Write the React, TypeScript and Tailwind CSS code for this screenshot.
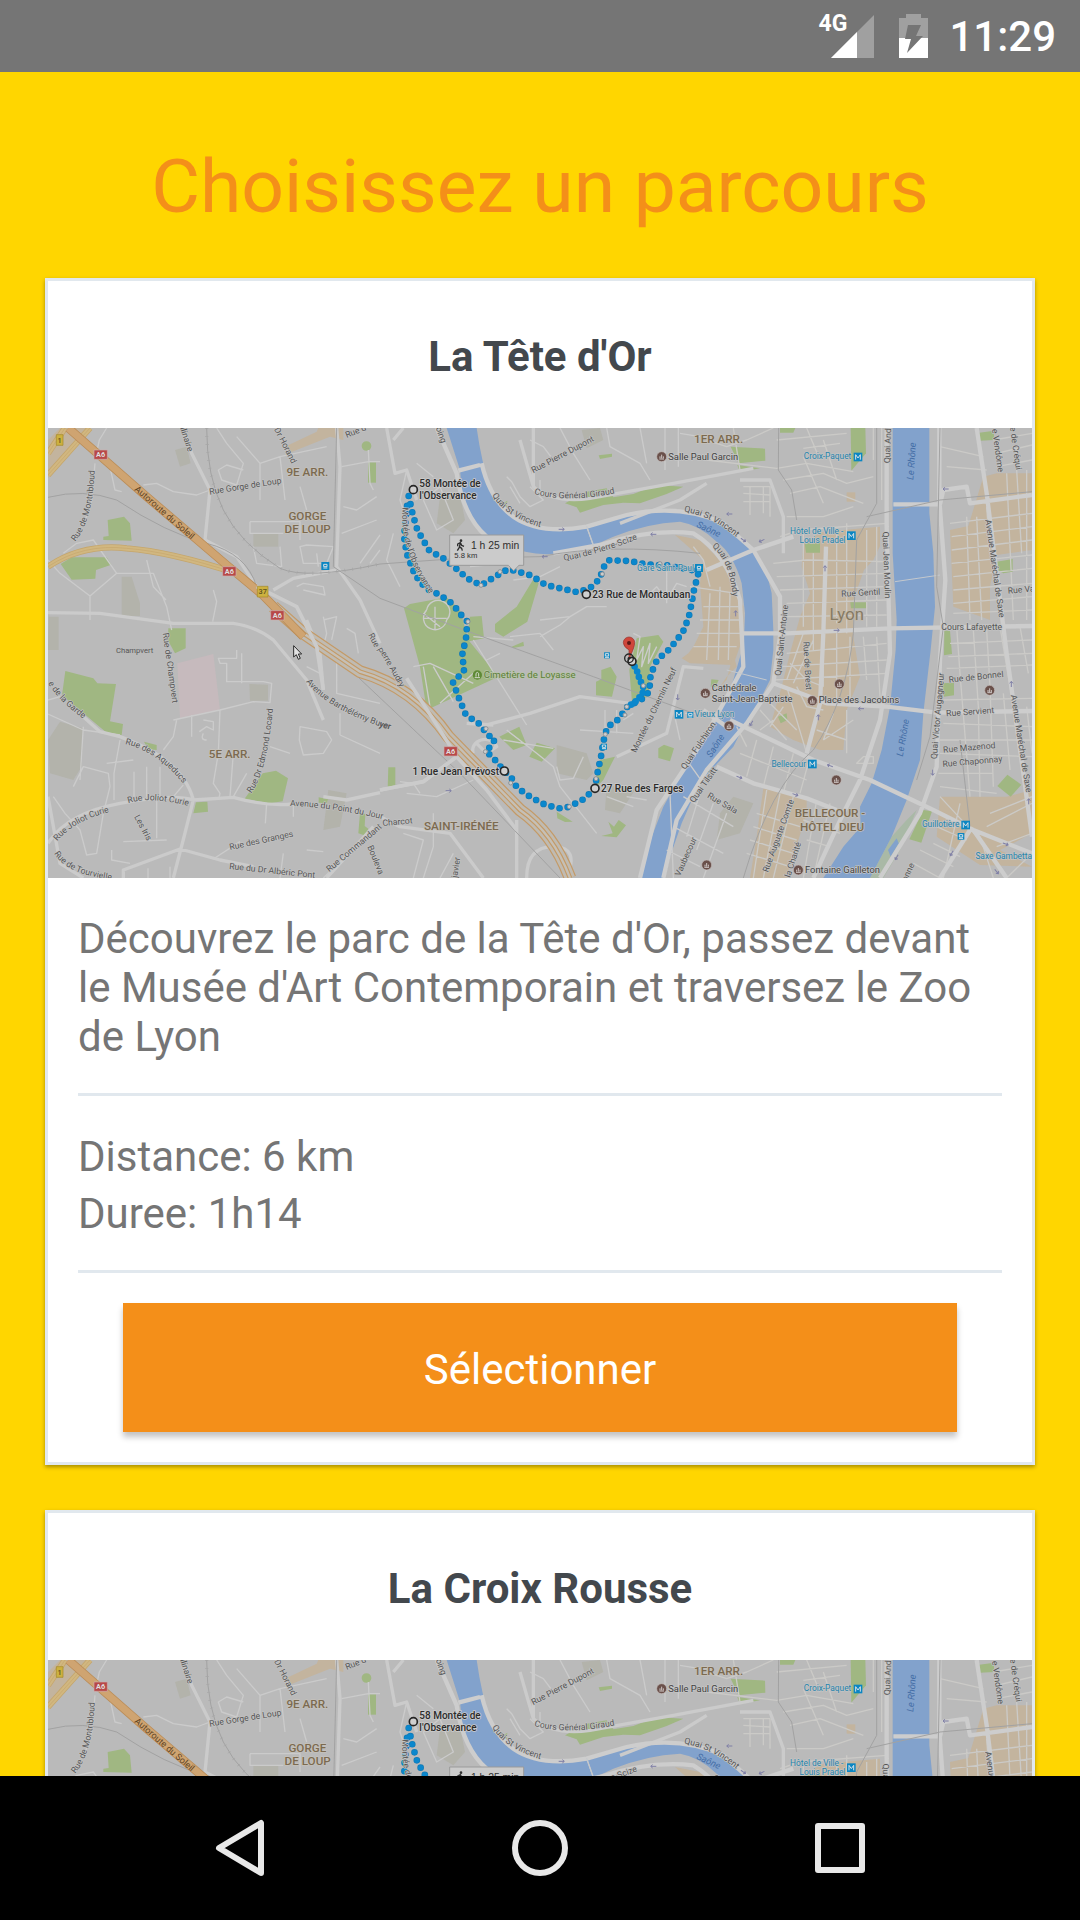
import { useId } from "react";

type Label = { text: string; x: number; y: number; rotate?: number };
type CurvedLabel = { text: string; path: string };

const SAONE =
  "M1220 24L1260 150L1270 250Q1275 285 1340 345Q1400 395 1520 403Q1620 400 1720 350Q1820 310 1920 305Q1980 315 2030 365Q2080 400 2105 490L2115 580L2112 670L2080 780L2055 850L2010 940L1920 1070L1870 1160L1820 1290L1798 1374H1875L1890 1310L1925 1210L1980 1085L2080 980L2110 920L2150 860L2190 780L2200 690V630L2195 520L2180 460L2140 395L2090 345Q2010 285 1930 275Q1830 272 1740 295L1640 325Q1560 342 1460 315Q1385 265 1350 200Q1325 130 1310 24Z";
const RHONE =
  "M2558 24V400L2570 600L2567 690L2550 860L2525 990L2495 1090L2460 1160L2462 1220L2410 1280L2350 1374H2490L2555 1250L2600 1140L2640 1020L2650 880L2672 690L2685 560L2680 400L2668 280V24Z";

const GREENS = [
  "M203 300L252 290L270 310L275 362L190 360V350L206 348Z",
  "M62 432L95 412L200 412L214 434L168 450L166 476L95 479Z",
  "M984 127H1008V188H984Z",
  "M965 78A14 14 0 1 0 994 78A14 14 0 1 0 965 78Z",
  "M385 625H437V685L405 700L383 660Z",
  "M76 753L160 775L172 790L228 792L210 904L249 912L245 945L200 938L66 826Z",
  "M312 965L350 975V990L325 988Z",
  "M614 1136L668 1060L708 1052L744 1075L728 1144L690 1150Z",
  "M468 1147L502 1145L504 1175L460 1180Z",
  "M836 1132L864 1138L860 1150L836 1148Z",
  "M960 1178L976 1182L974 1218L985 1226L978 1248L955 1240Z",
  "M1045 1042H1066V1105H1043Z",
  "M1092 565L1110 552L1220 532L1260 570L1285 660L1375 770L1160 870L1140 740Z",
  "M1290 590L1325 588L1332 655L1280 665Z",
  "M1480 478L1496 490L1462 605L1390 650L1365 635V612L1430 560Z",
  "M1415 680L1450 665L1452 678L1420 684Z",
  "M1575 250L1640 215L1700 205L1720 232L1780 222L1850 195L1930 200L1880 222L1800 250L1750 248L1690 255L1620 278L1610 262Z",
  "M1676 106L1716 101V110L1680 117Z",
  "M1390 250L1402 242L1400 262Z",
  "M1790 655L1855 645L1870 665L1830 740L1826 830L1776 845L1768 750Z",
  "M1684 750L1712 740L1730 770L1716 830L1668 826V785L1684 778Z",
  "M1378 950L1438 920L1460 975L1420 990Z",
  "M1490 968L1545 985L1505 1025L1468 1010Z",
  "M1855 985L1872 974L1902 985L1890 1024L1855 1014Z",
  "M1680 1020L1725 1010L1690 1080L1672 1098L1668 1060Z",
  "M1550 1175L1598 1205L1575 1206L1552 1195Z",
  "M1705 1205L1722 1220L1736 1200L1758 1216L1730 1252L1684 1248L1718 1240Z",
  "M2072 80L2175 86L2176 122L2096 130Z",
  "M2092 135L2160 145L2100 156Z",
  "M2220 24H2266L2260 38H2220Z",
  "M2432 24H2476L2478 100L2434 152Z",
  "M2294 370H2340V398H2298Z",
  "M2431 547H2478V565H2433Z",
  "M2818 38L2862 32V60L2820 62Z",
  "M2870 425L2918 417V455L2890 460L2870 450Z",
  "M2713 632H2730L2736 702L2712 706Z",
  "M2704 790L2742 788V826L2712 830Z",
  "M2872 1098L2902 1064L2944 1094L2912 1130Z",
  "M2650 1170L2676 1174L2644 1268L2608 1258Z",
  "M2014 778L2036 780L2026 802L2012 800Z",
  "M2214 890L2240 880L2242 900L2222 910Z",
];

const TANS = [
  "M735 80L830 35L835 24H910V60L870 50L745 100Z",
  "M24 60L60 24H150L24 175Z",
  "M1905 345L1980 360L2040 420L2090 520L2110 560L2110 650L2080 735L1950 730L1925 715L1945 700L1960 680L1990 620L1980 490L1990 420Z",
  "M2290 365L2350 335L2520 320V378L2500 420L2472 450L2440 540V650L2460 770L2420 870L2410 990L2340 990L2260 960L2190 920L2225 800L2250 700L2280 590L2310 520L2285 440Z",
  "M2730 330L2785 318L2830 170L2870 160H2976V390L2870 405L2850 500V600L2740 560Z",
  "M2170 1105L2300 1130L2300 1180L2240 1374H2130L2150 1250Z",
  "M2700 1130L2900 1130L2976 1110V1240L2880 1290L2976 1340L2820 1335L2690 1250Z",
  "M2420 217H2446V245H2420Z",
  "M2040 800L2060 770L2090 740L2080 700L2060 780Z",
];

const BUILT = [
  "M405 90L440 80L452 130L420 140Z",
  "M640 340H715V380H640Z",
  "M245 470H275L300 550V588H245Z",
  "M26 590H56V690H24Z",
  "M60 905L130 925L125 1040L100 1080L30 1060L24 960Z",
  "M628 792L684 794V842H630Z",
  "M1550 975L1640 1000L1660 1060L1640 1080L1550 1060Z",
  "M1700 1095L1785 1110L1740 1180L1695 1170Z",
  "M1625 30L1680 24L1690 60L1640 85Z",
  "M1200 230L1260 225L1275 300L1240 340L1190 310Z",
  "M2080 1130L2140 1150L2100 1240L2030 1260L2040 1180Z",
  "M865 1110L920 1120L900 1220L850 1230Z",
];

const MINOR_ROADS =
  "M165 120L178 60L200 24M205 118L225 210L245 215M310 195L350 190L400 215L470 225L510 210M165 130L155 240L130 320M70 400L110 370L160 360L230 460L150 528L60 460L24 420M150 528V600M230 460H340L380 560L395 630M320 420L340 500L378 540M520 510L530 545L518 605M530 24L560 70L610 130L590 195L545 180L535 150L560 135L610 150M590 50L660 130L720 110L860 80M660 130V240M720 110L735 240M780 200L800 270M630 305H780V360M630 305V340H730M640 380L650 430L725 440L720 380M780 380L800 375L880 380L860 430H790ZM835 440L830 400M905 140L985 125H1020M985 90L990 190L1000 210M910 260L950 270L1010 230M905 340L1010 300M960 430L1020 345M990 430L1020 390" +
  "M770 500L790 490L850 500L855 525L790 510M850 590L860 640L850 680L870 700M850 600L890 590L875 660M920 625L945 640L955 700M24 882L130 930L240 945M400 900L540 870L640 845L690 848L695 790L670 785H560V730H540L535 715H590V690M605 700V790M540 870L535 1000L520 1090L540 1120L536 1140M410 900L400 950L370 990M455 885V950M490 900L520 905V930L500 920L478 935M490 940Q480 960 500 960M240 960L222 1060V1140M200 1030L280 1020M282 1055V1130M320 1040V1130M360 1040V1130M100 1100L130 1040L205 1060L210 1100L190 1180L170 1300L140 1305L120 1230L75 1180L40 1130M250 1265L380 1260M350 1140V1255M580 1000L570 1130M620 1060L580 1130M680 1150L676 1210M760 1150V1190M690 980L750 1000M780 920L860 935L875 960L850 1000L790 1005L778 960ZM900 880V945M900 945L1020 1000M890 720V820L1020 850M840 760L800 740M520 1317L600 1265M850 1295L800 1290M720 1374L730 1300M390 1374V1340M324 1374V1345M215 1290V1320L270 1330M400 1130L430 1095M24 840L60 830M130 920L120 1080M850 1374L1000 1230" +
  "M1100 300L1080 240L1100 150M1150 240L1200 200L1240 300L1190 330L1150 240M1060 340L1040 420L1080 500M1180 170L1130 130M1470 60L1510 80L1540 120M1560 24L1600 100L1650 180M1700 24L1710 80L1800 130L1830 180M1800 24L1820 130M1875 24V150M1915 24V140M1920 40L1980 50M1470 200L1510 240L1470 260L1440 230L1415 185L1400 170M1410 200L1440 250M1500 210V180M1640 320L1660 375M1420 480L1500 470L1560 440M1500 600L1590 590L1640 560L1700 560M1590 590L1560 615L1500 650M1410 650L1500 640L1540 690M1290 440L1400 430M1300 650L1420 660M1150 580L1200 620M1160 570A35 35 0 1 0 1220 600A35 35 0 1 0 1160 570M1150 595H1220M1185 560V630M1120 740L1170 730L1300 790M1170 860L1150 740M1200 850L1300 760M1240 845L1180 740M1300 660L1460 915M1380 700L1340 720M1400 930L1490 1000L1540 1040L1560 1100L1670 1240M1390 960L1450 970L1540 985M1550 1040L1560 1080L1600 1075L1630 1010M1620 930L1700 935L1780 940M1695 870V930M1730 870V940M1750 900L1780 880" +
  "M1700 920L1690 970M1780 640L1800 650L1790 720L1810 680L1805 740L1830 670L1825 730L1850 680M1830 520L1850 500L1880 540L1910 490L1940 500M1880 450V550M1100 1120L1190 1130L1300 1080M1180 1180V1280L1150 1374M1090 1240L1150 1260L1120 1374M1300 1060L1380 1050M1240 1300L1200 1374M1080 1085L1120 1090L1140 1120M1760 1130L1820 1140M1700 1130L1780 1160M1920 960L1900 870M1935 880L2020 880M1890 1120L1900 1374M1930 1130L2080 1220M1900 1220L2050 1300M1880 1290L1980 1340M1980 1120L1940 1250M2020 1150L1970 1290M2060 1180L1990 1374M1940 1020L1990 1090";

const CITY_STREETS =
  "M2000 60L2060 80L2120 60L2200 24M2080 24L2100 150M2000 120L2210 145M2110 200H2190V290M2130 200V285M2170 200V280M2110 220L2190 225M2110 245H2190M2210 145L2300 130L2440 155M2230 180L2350 160L2420 190L2500 170M2250 220L2340 200L2470 250M2240 290L2350 290L2440 260M2290 110L2350 250M2350 60L2390 180M2300 24L2340 120M2400 70L2290 85M2210 60L2420 40M2500 24V120M2525 24V240M2220 350L2280 330L2540 310M2200 430L2300 420L2550 425M2210 470L2540 460M2220 510L2530 500M2240 550L2540 540M2240 590L2540 585M2240 700L2540 670M2220 740L2540 720M2200 780L2540 760M2290 340V620M2320 400V690M2390 340V610M2420 310V640M2480 330V620M2510 320V620M2290 640L2240 780M2320 660L2260 790M2350 640V800M2390 640V840M2430 650V860M2470 650L2480 780M2510 650L2520 830" +
  "M2240 800L2300 1000M2270 800L2300 860L2350 870M2350 800L2300 780L2250 730M2160 870L2240 960M2180 840L2270 930M2200 900L2160 930M2230 860L2190 920M2100 1000L2300 1080M2150 960L2120 1070M2200 980L2170 1100M2260 1000L2230 1120M2310 1010L2280 1120M2380 880L2350 960M2420 870V1000M2440 900L2350 960M2470 1010H2500V1030H2450Z" +
  "M2700 80L2830 110M2720 140L2840 150M2870 100L2976 75M2860 60L2976 40M2870 140L2976 120M2730 310L2976 280M2735 350L2976 320M2735 390L2976 360M2735 430L2976 405M2740 470L2976 445M2740 510L2976 490M2740 550L2976 530M2740 580L2976 570M2730 670L2976 660M2725 710L2976 700M2720 745L2976 735M2710 840L2976 835M2710 910L2976 920M2700 960L2976 960M2700 1000L2976 1010M2695 1060L2860 1060M2700 1100L2870 1120M2780 290L2790 600M2810 290L2825 600M2840 260L2850 400M2900 160L2920 600M2930 150L2945 400M2960 150V600M2750 620L2760 760L2790 1130M2800 630L2815 860L2820 1130M2840 630L2850 800L2860 1100M2880 620L2920 860M2940 620L2965 760M2960 860L2976 1000M2890 820L2910 1050" +
  "M1960 380L1990 420L2010 500M1950 500L2090 520M1990 560H2100M1980 600H2100M1970 640H2100M1960 680L2090 680M2010 520L2000 720M2040 500L2035 720M2070 520L2065 720M2180 1110L2140 1374M2220 1120L2170 1374M2260 1130L2200 1374M2150 1180L2280 1220M2140 1220L2270 1260M2130 1260L2260 1300M2120 1300L2250 1340M2330 1140L2290 1374M2370 1150L2320 1374M2290 1200L2400 1240M2300 1260L2370 1280M2700 1130L2830 1270M2760 1150L2710 1374M2820 1250L2860 1374M2690 1220L2780 1260M2680 1270L2760 1310M2840 1220L2976 1150M2850 1180L2976 1130M2870 1280L2976 1240M2900 1374L2976 1300M2640 1290L2740 1340M2620 1330L2700 1374M2090 920L2120 980M2330 930L2420 960";

const MEDIUM_ROADS =
  "M430 24L455 100L510 210L495 360L590 410L650 500M890 24L900 140L890 440L960 540L1020 670M700 510L760 475L890 450M24 578L180 580L400 610H580Q650 620 700 660L800 780L850 900M800 600L840 700L850 810M130 890L180 935L240 950Q430 1020 460 1140Q430 1260 400 1374M24 1270Q80 1180 240 1150T460 1140L580 1132Q680 1160 760 1152M250 1374V1350L420 1287L540 1320L640 1340M860 1374L1000 1220M850 1130L920 1140L1020 1118M24 1130L60 1330L130 1374M1040 24L1065 160L1100 150L1130 240M1060 60L1090 24M1480 24V200L1440 60M1740 310L1920 240L2000 190M1480 200Q1540 250 1650 235L1900 190L2140 145M1320 920L1470 880L1620 830L1770 850M1280 910L1360 915M1020 1110L1150 1085L1250 1010M1300 1000A35 30 0 1 1 1370 980L1340 1000L1310 970M1730 1010L1880 940L1930 740L1990 745M1000 1180L1080 1220L1230 1240L1330 1374M1430 1200V1374M1460 1374Q1460 1280 1540 1280T1580 1374M2100 180H2190L2230 290V400";

const MAJOR_ROADS =
  "M1190 24L1250 160Q1270 290 1340 350M1325 130Q1350 240 1420 290Q1500 345 1640 320L1760 285Q1920 250 2050 310L2140 390L2220 530V650L2200 790L2120 910L2000 1050L1910 1200L1870 1374M1540 400L1680 375Q1830 325 1960 340Q2060 400 2100 540L2110 740L1990 960L1850 1170L1800 1374M2000 450L2140 390L2260 350M2110 640H2240L2550 625L2976 618M2540 24V320L2550 700L2520 900L2460 1080L2410 1180L2320 1374M2698 24V240L2716 480L2700 720L2690 1040L2640 1180L2520 1374M2560 253H2700L2710 210L2780 200L2790 250L2976 225M2810 24L2840 220L2900 700L2950 1060L2976 1250M1255 152L1320 135M2200 790L2310 830L2360 850L2540 860L2690 878L2976 873M2070 900L2320 1020L2490 1080L2680 1170L2800 1230L2976 1300M2030 1040L2140 1090L2300 1135L2390 1170M2358 380L2350 640L2340 850L2300 1000M2800 1230L2900 1374M2790 1230L2700 1374M1990 870L2060 920";

const FREEWAY = "M85 24L320 230L560 435L668 525L790 650";
const FREEWAY_SOUTH = "M700 560L790 640L960 755Q1120 800 1225 950L1440 1170Q1540 1240 1590 1374";
const RING_ROAD =
  "M24 440Q130 370 260 385Q390 395 590 460M24 165L150 24M24 100L75 24";
const RAILWAYS =
  "M500 24Q500 170 550 270T720 445Q800 480 1020 432M24 232Q130 205 230 240Q380 340 500 370T650 500L900 720L1260 1060L1560 1374M890 24L880 440L1020 535L1300 640M1020 432L1260 415L1500 410Q1700 370 1980 400M1300 640L1660 770L1960 880M2510 24V250L2450 360L2440 640Q2420 840 2320 990Q2190 1100 2110 1374M2480 290L2700 240L2976 215M2700 24L2690 500L2710 620L2670 950L2630 1080M2760 960L2790 1220M2216 24L2215 150L2255 210L2270 300";

const ROUTE =
  "M1106 228L1118 282L1132 330L1168 392L1210 415L1244 442L1282 475L1323 496L1365 470L1403 448L1428 453L1475 467L1515 494L1565 506L1615 517L1650 504L1678 478L1692 440L1706 421L1770 423L1817 433L1880 436L1955 450L1975 460L1962 510L1949 581L1933 628L1918 650L1888 688L1851 720L1832 764L1828 814L1810 835L1760 862L1737 897L1702 921L1690 965L1683 1010L1670 1070L1665 1105L1632 1137L1588 1160L1564 1166L1517 1155L1473 1132L1431 1103L1412 1069L1392 1053L1368 1023L1340 995L1365 958L1345 946L1317 911L1297 898L1276 881L1257 835L1239 787L1272 753L1267 703L1278 655L1282 605L1267 589L1237 551L1198 524L1157 505L1125 465L1100 400L1092 350L1102 250";
const ROUTE_SPUR = "M1775 725L1790 750L1800 782L1810 797L1808 820L1790 842L1762 862";

const ROUTE_NODES = [
  [1323, 496], [1380, 455], [1687, 462], [1860, 431], [1284, 605], [1338, 926],
  [1336, 995], [1412, 1089], [1588, 1160], [1668, 1076], [1696, 943], [1760, 860],
  [1810, 797], [1755, 885],
];
const STOPS = [[1120, 209], [1639, 523], [1393, 1053], [1665, 1105], [1776, 724]];

const STREET_LABELS: Label[] = [
  { text: "Rue Gorge de Loup", x: 509, y: 224, rotate: -9 },
  { text: "Rue d", x: 920, y: 54, rotate: -22 },
  { text: "llinaire", x: 420, y: 24, rotate: 72 },
  { text: "Dr Horand", x: 702, y: 28, rotate: 63 },
  { text: "Rue P", x: 984, y: 645, rotate: 62 },
  { text: "Rue de Champvert", x: 368, y: 640, rotate: 82 },
  { text: "Rue des Granges", x: 570, y: 1290, rotate: -12 },
  { text: "Les Iris", x: 282, y: 1190, rotate: 62 },
  { text: "Rue du Dr Albéric Pont", x: 567, y: 1347, rotate: 6 },
  { text: "Rue Pierre Dupont", x: 1480, y: 160, rotate: -28 },
  { text: "oing", x: 1187, y: 24, rotate: 70 },
  { text: "Rue Commandant", x: 868, y: 1357, rotate: -40 },
  { text: "Charcot", x: 1028, y: 1218, rotate: -5 },
  { text: "Bouleva", x: 982, y: 1280, rotate: 68 },
  { text: "erre Audry", x: 1022, y: 700, rotate: 60 },
  { text: "javier", x: 1252, y: 1374, rotate: -82 },
  { text: "Montée du Chemin Neuf", x: 1788, y: 1000, rotate: -64 },
  { text: "Quai Fulchiron", x: 1936, y: 1050, rotate: -56 },
  { text: "Quai Tilsitt", x: 1962, y: 1150, rotate: -55 },
  { text: "Vaubecour", x: 1920, y: 1370, rotate: -66 },
  { text: "Rue Sala", x: 2000, y: 1132, rotate: 30 },
  { text: "Rue Auguste Comte", x: 2184, y: 1358, rotate: -70 },
  { text: "la Charité", x: 2250, y: 1374, rotate: -72 },
  { text: "Quai Saint-Antoine", x: 2222, y: 768, rotate: -84 },
  { text: "Rue de Brest", x: 2290, y: 665, rotate: 87 },
  { text: "Rue Gentil", x: 2404, y: 530, rotate: -3 },
  { text: "Quai And", x: 2550, y: 130, rotate: -88 },
  { text: "Quai Jean Moulin", x: 2528, y: 335, rotate: 88 },
  { text: "e Vendôme", x: 2856, y: 28, rotate: 82 },
  { text: "e de Créqui", x: 2910, y: 22, rotate: 82 },
  { text: "Avenue Maréchal de Saxe", x: 2836, y: 300, rotate: 82 },
  { text: "Avenue Maréchal de Saxe", x: 2912, y: 826, rotate: 81 },
  { text: "Rue Va", x: 2904, y: 521, rotate: -5 },
  { text: "Cours Lafayette", x: 2704, y: 629 },
  { text: "Rue de Bonnel", x: 2727, y: 788, rotate: -6 },
  { text: "Rue Servient", x: 2719, y: 889, rotate: -4 },
  { text: "Rue Mazenod", x: 2710, y: 998, rotate: -5 },
  { text: "Rue Chaponnay", x: 2708, y: 1041, rotate: -5 },
  { text: "Quai Victor Augagneur", x: 2690, y: 1018, rotate: -85 },
  { text: "onne", x: 2600, y: 1386, rotate: -65 },
];

const CURVED_LABELS: CurvedLabel[] = [
  { text: "Rue de Montribloud", path: "M106 365Q170 285 164 90" },
  { text: "e de la Garde", path: "M24 790Q60 850 150 910" },
  { text: "Rue des Aqueducs", path: "M255 972Q370 1000 450 1120" },
  { text: "Rue Joliot Curie", path: "M52 1264Q110 1190 260 1165" },
  { text: "Rue Joliot Curie", path: "M265 1150Q340 1125 480 1168" },
  { text: "Rue Dr Edmond Locard", path: "M634 1120Q690 1040 704 800" },
  { text: "Avenue Barthélémy Buyer", path: "M798 785Q870 880 1090 940" },
  { text: "Avenue du Point du Jour", path: "M750 1158Q880 1160 1090 1212" },
  { text: "Rue de Tourvielle", path: "M42 1300Q80 1370 260 1385" },
  { text: "Quai St Vincent", path: "M1356 226Q1400 300 1550 335" },
  { text: "Cours Général Giraud", path: "M1482 222Q1600 255 1790 205" },
  { text: "Quai de Pierre-Scize", path: "M1572 422Q1680 405 1830 342" },
  { text: "Quai St Vincent", path: "M1932 275Q2030 290 2120 380" },
  { text: "Quai de Bondy", path: "M2016 380Q2080 430 2080 580" },
  { text: "Montée de l'Observance", path: "M1088 262Q1075 400 1190 550" },
];

const AREA_LABELS = [
  { text: "9E ARR.", x: 802, y: 168 },
  { text: "GORGE", x: 802, y: 299 },
  { text: "DE LOUP", x: 803, y: 338 },
  { text: "5E ARR.", x: 569, y: 1014 },
  { text: "1ER ARR.", x: 2036, y: 70 },
  { text: "SAINT-IRÉNÉE", x: 1264, y: 1230 },
  { text: "BELLECOUR -", x: 2370, y: 1192 },
  { text: "HÔTEL DIEU", x: 2376, y: 1232 },
];

const TRANSIT_LABELS: Label[] = [
  { text: "Croix-Paquet", x: 2434, y: 117 },
  { text: "Hôtel de Ville -", x: 2410, y: 341 },
  { text: "Louis Pradel", x: 2416, y: 369 },
  { text: "Gare Saint-Paul", x: 1962, y: 452 },
  { text: "Vieux Lyon", x: 2083, y: 890 },
  { text: "Bellecour", x: 2298, y: 1040 },
  { text: "Guillotière", x: 2758, y: 1222 },
  { text: "Saxe Gambetta", x: 2976, y: 1316 },
];
const METROS = [[2454, 111], [2434, 347], [1917, 883], [2317, 1032], [2777, 1215]];
const TRAINS = [
  [856, 438, 12], [1977, 444, 12], [2763, 1249, 10],
  [1701, 706, 9], [1951, 885, 9], [1692, 980, 9],
];

const PLACE_LABELS: Label[] = [
  { text: "Salle Paul Garcin", x: 1885, y: 119 },
  { text: "Cathédrale", x: 2015, y: 813 },
  { text: "Saint-Jean-Baptiste", x: 2015, y: 846 },
  { text: "Place des Jacobins", x: 2336, y: 850 },
  { text: "Fontaine Gailleton", x: 2295, y: 1358 },
];
const PLACES = [
  [1865, 110], [1996, 820], [2067, 918], [2317, 842], [2398, 792], [2389, 1080],
  [2275, 1350], [2000, 1335], [2849, 811],
];
const EXITS = [["1", 59, 60], ["37", 668, 515]] as const;
const SHIELDS = [[182, 104], [568, 454], [712, 586], [1232, 994]];
const ARROWS = [
  [1565, 328, 0], [1514, 410, 180], [1840, 343, 180], [2068, 282, 180], [2110, 360, 35],
  [2165, 362, 155], [2355, 445, -90], [2087, 580, -90], [2390, 631, 0], [2717, 207, 180],
  [2463, 866, 180], [2335, 892, -90], [2370, 1037, 200], [2098, 1072, 20], [2266, 1124, 20],
  [2678, 1058, 90], [2914, 792, -90], [2966, 1144, -90], [2570, 1312, 120], [2735, 1300, 120],
  [2870, 1355, 50], [2897, 1272, 20], [1226, 1112, 0], [1913, 832, 90], [2134, 910, 120],
];

function RouteMap({ name }: { name: string }) {
  const id = useId();
  return (
    <svg
      role="img"
      aria-label={`Carte du parcours ${name}`}
      viewBox="24 24 2952 1350"
      className="block w-full bg-[#bababa] font-[Roboto,sans-serif]"
      fill="none"
      strokeLinejoin="round"
    >
      <defs>
        {CURVED_LABELS.map((l, i) => <path key={l.path} id={`${id}-${i}`} d={l.path} />)}
      </defs>
      <path d="M412 730L520 702L540 870L420 895Z" fill="#c6babd" />
      {BUILT.map((d) => <path key={d} d={d} fill="#b3b3ab" />)}
      {TANS.map((d) => <path key={d} d={d} fill="#c3b49e" />)}
      {GREENS.map((d) => <path key={d} d={d} fill="#a0b782" />)}
      <path d="M2555 1250L2600 1200L2630 1170L2580 1290L2530 1374H2490Z" fill="#a9b9a6" />
      <path d={SAONE} fill="#82a2cc" />
      <path d={RHONE} fill="#82a2cc" />
      <path d="M2544 1290L2570 1255L2576 1270L2552 1310Z" fill="#82a2cc" />
      <path d={MINOR_ROADS} stroke="#cbcbcb" strokeWidth="4" />
      <path d={CITY_STREETS} stroke="#cbcac7" strokeWidth="4" />
      <path d={MEDIUM_ROADS} stroke="#cbcbcb" strokeWidth="10" />
      <path d={MAJOR_ROADS} stroke="#cdcdcd" strokeWidth="13" />
      <path d="M2565 485L2700 465M1640 318L1660 378M2060 750L2180 780" stroke="#c4c8cc" strokeWidth="3" />
      <path d={RAILWAYS} stroke="#a2a2a2" strokeWidth="3" />
      <path d="M500 24Q500 170 550 270T720 445Q800 480 1020 432" stroke="#a6a6a6" strokeWidth="10" strokeDasharray="2 22" />
      <path d={RING_ROAD} stroke="#c5a66c" strokeWidth="19" />
      <path d={RING_ROAD} stroke="#d1b780" strokeWidth="14" />
      <path d={RING_ROAD} stroke="#c5a66c" strokeWidth="2" />
      <path d={FREEWAY_SOUTH} stroke="#c49a66" strokeWidth="38" />
      <path d={FREEWAY_SOUTH} stroke="#c0bbb2" strokeWidth="31" />
      <path d={FREEWAY_SOUTH} stroke="#c49a66" strokeWidth="14" />
      <path d={FREEWAY_SOUTH} stroke="#c6c0b6" strokeWidth="7" />
      <path d={FREEWAY} stroke="#bb8d58" strokeWidth="26" />
      <path d={FREEWAY} stroke="#cfa471" strokeWidth="21" />
      <path d="M650 500L770 560L830 680L850 810M1020 1110L1150 1085L1250 1010L1340 1110L1430 1230M1100 775L1200 930L1250 1010" stroke="#cbcbcb" strokeWidth="11" />

      {ARROWS.map(([x, y, r]) => (
        <path key={`${x}-${y}`} d="M-9 0H7M2 -5L8 0L2 5" stroke="#7f7fa6" strokeWidth="3" transform={`translate(${x} ${y}) rotate(${r})`} />
      ))}

      <path d={ROUTE} stroke="#1379b3" strokeWidth="20" strokeLinecap="round" strokeDasharray="0 25" />
      <path d={ROUTE} stroke="#0a87cd" strokeWidth="16" strokeLinecap="round" strokeDasharray="0 25" />
      <path d={ROUTE_SPUR} stroke="#0a87cd" strokeWidth="20" strokeLinecap="round" strokeDasharray="0 17" />
      {ROUTE_NODES.map(([x, y]) => (
        <circle key={`${x}-${y}`} cx={x} cy={y} r="6" fill="#cdcdcd" stroke="#8d9296" strokeWidth="3" />
      ))}

      <g fill="#565656" stroke="#c4c4c4" strokeWidth="4" paintOrder="stroke" fontSize="26">
        {STREET_LABELS.map((l) => (
          <text key={`${l.text}-${l.y}`} transform={`translate(${l.x} ${l.y}) rotate(${l.rotate ?? 0})`}>{l.text}</text>
        ))}
        {CURVED_LABELS.map((l, i) => (
          <text key={l.path}><textPath href={`#${id}-${i}`}>{l.text}</textPath></text>
        ))}
      </g>
      <text transform="translate(1016 920) rotate(14)" fill="#565656" fontSize="26">yer</text>
      <text x="228" y="698" fill="#565656" fontSize="23">Champvert</text>
      <text transform="translate(282 210) rotate(41)" fill="#5f4526" fontSize="27">Autoroute du Soleil</text>
      <g fill="#456ea6" fontSize="28" fontStyle="italic">
        <text transform="translate(1968 320) rotate(25)">Saône</text>
        <text transform="translate(2620 180) rotate(-86)">Le Rhône</text>
        <text transform="translate(2588 1010) rotate(-80)">Le Rhône</text>
        <text transform="translate(2014 1014) rotate(-58)">Saône</text>
      </g>
      <g fill="#7b6a50" stroke="#c6c2bb" strokeWidth="4" paintOrder="stroke" fontSize="35" fontWeight="500" textAnchor="middle">
        {AREA_LABELS.map((l) => <text key={l.text} x={l.x} y={l.y}>{l.text}</text>)}
      </g>
      <text x="2420" y="600" fill="#857a63" stroke="#c3b9a9" strokeWidth="4" paintOrder="stroke" fontSize="50" textAnchor="middle">Lyon</text>
      <g fill="#2583ac" stroke="#c4c4c4" strokeWidth="4" paintOrder="stroke" fontSize="25" textAnchor="end">
        {TRANSIT_LABELS.map((l) => <text key={l.text} x={l.x} y={l.y}>{l.text}</text>)}
      </g>
      <g fill="#424242" stroke="#c6c6c6" strokeWidth="4" paintOrder="stroke" fontSize="28">
        {PLACE_LABELS.map((l) => <text key={l.text} x={l.x} y={l.y}>{l.text}</text>)}
      </g>
      <text x="1331" y="774" fill="#5c7f38" stroke="#b9c4ab" strokeWidth="4" paintOrder="stroke" fontSize="29">Cimetière de Loyasse</text>
      <circle cx="1312" cy="765" r="14" fill="#5f8a35" />
      <path d="M1304 773H1320M1308 770V760Q1312 754 1316 760V770" stroke="#d6dccf" strokeWidth="3" />

      {METROS.map(([x, y]) => (
        <g key={`${x}-${y}`}>
          <rect x={x - 13} y={y - 13} width="26" height="26" fill="#0b86c2" />
          <path d={`M${x - 7} ${y + 8}V${y - 7}L${x} ${y + 3}L${x + 7} ${y - 7}V${y + 8}`} stroke="#d5e0e6" strokeWidth="3" />
        </g>
      ))}
      {TRAINS.map(([x, y, r]) => (
        <g key={`${x}-${y}`}>
          <rect x={x - r} y={y - r} width={r * 2} height={r * 2} fill="#0b86c2" />
          <path d={`M${x - 5} ${y - 5}H${x + 5}V${y + 2}H${x - 5}ZM${x - 6} ${y + 6}H${x + 6}`} stroke="#d5e0e6" strokeWidth="3" />
        </g>
      ))}
      {PLACES.map(([x, y]) => (
        <g key={`${x}-${y}`}>
          <circle cx={x} cy={y} r="15" fill="#6a504a" stroke="#c6c0be" strokeWidth="2" />
          <path d={`M${x - 7} ${y + 7}H${x + 7}M${x - 5} ${y + 5}V${y - 1}M${x} ${y + 5}V${y - 6}M${x + 5} ${y + 5}V${y - 1}`} stroke="#cfc8c6" strokeWidth="3" />
        </g>
      ))}
      {SHIELDS.map(([x, y]) => (
        <g key={`${x}-${y}`}>
          <rect x={x - 20} y={y - 14} width="40" height="28" fill="#b84848" stroke="#cdb0b0" strokeWidth="2" />
          <text x={x} y={y + 8} fill="#dedede" fontSize="22" fontWeight="700" textAnchor="middle">A6</text>
        </g>
      ))}
      {EXITS.map(([n, x, y]) => (
        <g key={n}>
          <rect x={n === "1" ? x - 10 : x - 16} y={y - 16} width={n === "1" ? 20 : 32} height="32" fill="#cdb13f" stroke="#a38a28" strokeWidth="2" />
          <text x={x} y={y + 8} fill="#5c5220" fontSize="22" fontWeight="500" textAnchor="middle">{n}</text>
        </g>
      ))}

      {STOPS.map(([x, y]) => (
        <circle key={`${x}-${y}`} cx={x} cy={y} r="12" fill="#cfcfcf" stroke="#262626" strokeWidth="5" />
      ))}
      <path d="M1767 716V690Q1750 680 1750 668A17 17 0 0 1 1784 668Q1784 682 1767 716Z" fill="#cf463b" stroke="#95302a" strokeWidth="2" />
      <circle cx="1767" cy="669" r="6" fill="#5b1a16" />
      <circle cx="1767" cy="715" r="13" stroke="#262626" strokeWidth="4" />
      <circle cx="1767" cy="715" r="4" fill="#262626" />

      <g fill="#2b2b2b" stroke="#cccccc" strokeWidth="5" paintOrder="stroke" fontSize="30" fontWeight="500">
        <text x="1138" y="202">58 Montée de</text>
        <text x="1138" y="237">l'Observance</text>
        <text x="1657" y="533">23 Rue de Montauban</text>
        <text x="1377" y="1064" textAnchor="end">1 Rue Jean Prévost</text>
        <text x="1683" y="1116">27 Rue des Farges</text>
      </g>

      <path d="M1229 345H1451V436H1437L1421 452L1405 436H1229Z" fill="#cbcbcb" stroke="#9b9b9b" strokeWidth="3" />
      <g fill="#2f2f2f" className="font-['Liberation_Sans',sans-serif]">
        <text x="1293" y="387" fontSize="31">1 h 25 min</text>
        <text x="1243" y="414" fontSize="23">5.8 km</text>
      </g>
      <circle cx="1263" cy="362" r="4" fill="#2f2f2f" />
      <path d="M1253 379V372L1261 368L1265 376L1272 379M1261 368L1258 382L1252 392M1258 380L1265 385L1267 392" stroke="#2f2f2f" strokeWidth="4" />

      <path d="M761 677V711L769 704L775 718L781 715L775 702H785Z" fill="#e2e2e2" stroke="#2c2c2c" strokeWidth="3" />
    </svg>
  );
}

type Course = { name: string; description: string; distance: string; duration: string };

const COURSES: Course[] = [
  {
    name: "La Tête d'Or",
    description:
      "Découvrez le parc de la Tête d'Or, passez devant le Musée d'Art Contemporain et traversez le Zoo de Lyon",
    distance: "6 km",
    duration: "1h14",
  },
  {
    name: "La Croix Rousse",
    description: "Découvrez la Croix Rousse",
    distance: "6 km",
    duration: "1h14",
  },
];

function CourseCard({ course }: { course: Course }) {
  return (
    <article className="shrink-0 border-[3px] border-[#e1e8ee] bg-white shadow-[0_2px_4px_rgba(0,0,0,0.35)]">
      <h2 className="pt-[51px] pb-[47px] text-center text-[42px] leading-[49px] font-bold text-[#43484d]">
        {course.name}
      </h2>
      <RouteMap name={course.name} />
      <div className="px-[30px] pb-[30px]">
        <p className="border-b-[3px] border-[#e1e8ee] pt-9 pb-8 text-[42px] leading-[49px]">
          {course.description}
        </p>
        <div className="border-b-[3px] border-[#e1e8ee] pt-8 pb-7 text-[42px] leading-[57px]">
          <p>Distance: {course.distance}</p>
          <p>Duree: {course.duration}</p>
        </div>
        <div className="px-[45px] pt-[30px]">
          <button
            type="button"
            className="block w-full bg-[#f48f19] pt-[42px] pb-[38px] text-[42px] leading-[49px] text-white shadow-[0_5px_6px_rgba(0,0,0,0.24)]"
          >
            Sélectionner
          </button>
        </div>
      </div>
    </article>
  );
}

function StatusBar() {
  return (
    <header className="flex h-[72px] shrink-0 items-center justify-end bg-[#757575] pr-6 text-white">
      <span className="mb-6 text-[23px] leading-6 font-bold">4G</span>
      <svg viewBox="0 0 43 43" className="-ml-4 size-[43px]" aria-hidden="true">
        <path d="M43 0V43H0Z" fill="#a0a0a0" />
        <path d="M26 17V43H0Z" fill="#fff" />
      </svg>
      <svg viewBox="0 0 29 44" className="ml-[25px] h-11 w-[29px]" aria-hidden="true">
        <path d="M0 4H7V0H22V4H29V44H0Z" fill="#a0a0a0" />
        <path d="M0 24H29V44H0Z" fill="#fff" />
        <path d="M9 11H22L17 22H24L8 39L12 25H6Z" fill="#757575" />
      </svg>
      <time className="ml-[21px] pt-px text-[42px] leading-[49px] font-medium">11:29</time>
    </header>
  );
}

function NavigationBar() {
  return (
    <nav className="grid h-36 shrink-0 grid-cols-[1fr_300px_300px_300px_1fr] items-center bg-black">
      <button type="button" aria-label="Retour" className="col-start-2 flex justify-center">
        <svg viewBox="0 0 60 60" className="size-[60px]" fill="none" stroke="#e8e8e8" strokeWidth="6" strokeLinejoin="round">
          <path d="M51 5V55L9 30Z" />
        </svg>
      </button>
      <button type="button" aria-label="Accueil" className="flex justify-center">
        <svg viewBox="0 0 60 60" className="size-[60px]" fill="none" stroke="#e8e8e8" strokeWidth="6">
          <circle cx="30" cy="30" r="25" />
        </svg>
      </button>
      <button type="button" aria-label="Applications récentes" className="flex justify-center">
        <svg viewBox="0 0 60 60" className="size-[60px]" fill="none" stroke="#e8e8e8" strokeWidth="6" strokeLinejoin="round">
          <path d="M8 8H52V52H8Z" />
        </svg>
      </button>
    </nav>
  );
}

export default function App() {
  return (
    <div className="flex h-screen flex-col overflow-hidden bg-[#ffd600] font-[Roboto,sans-serif] text-[#757575]">
      <StatusBar />
      <main className="flex min-h-0 flex-1 flex-col gap-[45px] overflow-hidden px-[45px]">
        <h1 className="mt-[70px] mb-[3px] text-center text-[75px] leading-[88px] text-[#f48f19]">
          Choisissez un parcours
        </h1>
        {COURSES.map((course) => (
          <CourseCard key={course.name} course={course} />
        ))}
      </main>
      <NavigationBar />
    </div>
  );
}
